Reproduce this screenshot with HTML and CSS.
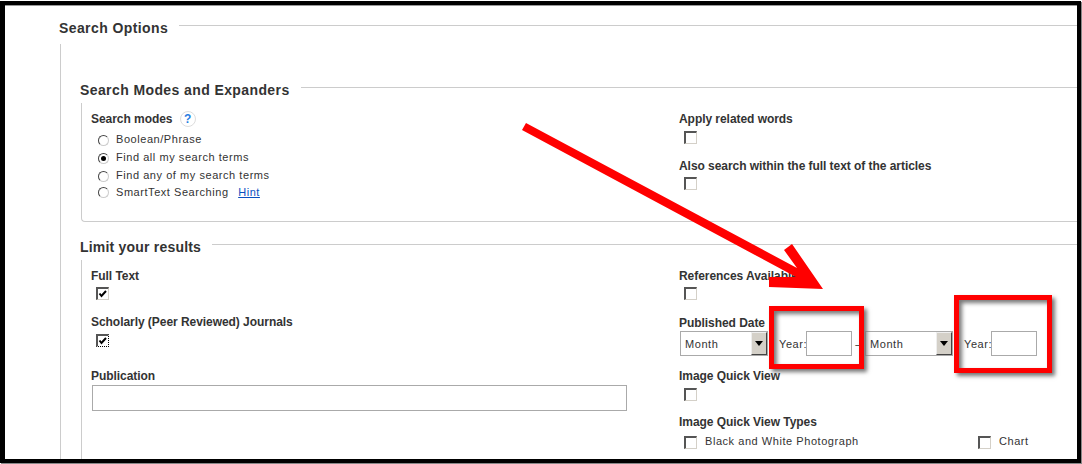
FILE: index.html
```html
<!DOCTYPE html>
<html lang="en">
<head>
  <meta charset="UTF-8">
  <title>Search Options</title>
  <link rel="stylesheet" href="styles.css">
</head>
<body>
  <div class="frame">
    <div class="legend legend-main">
      <h2>Search Options</h2>
      <span class="rule"></span>
    </div>
    <div class="options">
      <div class="legend legend-modes">
        <h3>Search Modes and Expanders</h3>
        <span class="rule"></span>
      </div>
      <div class="group group-modes">
        <div class="col">
          <div class="label">Search modes <span class="help">?</span></div>
          <div class="radios">
            <div class="radio-row"><span class="radio"></span>Boolean/Phrase</div>
            <div class="radio-row"><span class="radio on"></span>Find all my search terms</div>
            <div class="radio-row"><span class="radio"></span>Find any of my search terms</div>
            <div class="radio-row last"><span class="radio"></span>SmartText Searching <a class="hint" href="#">Hint</a></div>
          </div>
        </div>
        <div class="col expanders">
          <div class="label">Apply related words</div>
          <span class="check"></span>
          <div class="label sp-also">Also search within the full text of the articles</div>
          <span class="check"></span>
        </div>
      </div>

      <div class="legend legend-limit">
        <h3>Limit your results</h3>
        <span class="rule"></span>
      </div>
      <div class="group group-limit">
        <div class="col">
          <div class="label">Full Text</div>
          <span class="check on">
            <svg viewBox="0 0 10 10"><path d="M1.5 4.5 L3.5 7 L8 2"/></svg>
          </span>
          <div class="label sp-scholarly">Scholarly (Peer Reviewed) Journals</div>
          <span class="check on dotted sp-check-scholarly">
            <svg viewBox="0 0 10 10"><path d="M1.5 4.5 L3.5 7 L8 2"/></svg>
          </span>
          <div class="label sp-publication">Publication</div>
          <input class="text publication" type="text">
        </div>
        <div class="col">
          <div class="label">References Available</div>
          <span class="check"></span>
          <div class="label sp-published">Published Date</div>
          <div class="date-row">
            <div class="select"><span class="select-value">Month</span><span class="select-btn"></span></div>
            <span class="year">Year:</span>
            <input class="text year-input" type="text">
            <span class="dash">–</span>
            <div class="select"><span class="select-value">Month</span><span class="select-btn"></span></div>
            <span class="year">Year:</span>
            <input class="text year-input" type="text">
          </div>
          <div class="label sp-quick">Image Quick View</div>
          <span class="check sp-check-quick"></span>
          <div class="label sp-types">Image Quick View Types</div>
          <div class="types">
            <div class="type"><span class="check"></span>Black and White Photograph</div>
            <div class="type"><span class="check"></span>Chart</div>
          </div>
        </div>
      </div>
    </div>
  </div>

  <!-- red markup drawn over the screenshot -->
  <svg class="arrow" viewBox="0 0 1082 464">
    <polygon points="526,123 797,268 784,250 792,244 823,289 769,287 769,277 796,277 522,130"/>
  </svg>
  <div class="callout callout-one"></div>
  <div class="callout callout-two"></div>
</body>
</html>
```

FILE: styles.css
```css
html, body {
  margin: 0;
  height: 464px;
  overflow: hidden;
  background: #fff;
}
body {
  position: relative;
  font-family: "Liberation Sans", Arial, sans-serif;
  font-size: 11px;
  color: #333;
  letter-spacing: 0.55px;
}
.frame {
  box-sizing: border-box;
  width: 1081px;
  height: 462px;
  margin-top: 1px;
  border-style: solid;
  border-color: #000;
  border-width: 4px 4px 4px 5px;
  box-shadow: 1px 1px 0 #888, inset 0 1px 0 #999;
  overflow: hidden;
}

/* headings with a line running off to the right */
.legend {
  display: flex;
}
.legend h2, .legend h3 {
  margin: 0;
  font-size: 14px;
  font-weight: bold;
  letter-spacing: 0.4px;
  white-space: nowrap;
  line-height: 16px;
}
.rule {
  flex: 1;
  height: 1px;
  margin: 5px 0 0 11px;
  background: #ccc;
}
.legend-main {
  margin: 15px 0 0 54px;
}
.options {
  height: 400px;
  margin: 8px 0 0 55px;
  padding: 38px 0 0 19px;
  border-left: 1px solid #ccc;
}
.legend-limit {
  margin-top: 17px;
}
.legend-limit h3 {
  letter-spacing: 0.2px;
}

.group {
  display: grid;
  grid-template-columns: 588px 1fr;
  margin: 5px 0 0 1px;
  padding: 8px 0 0 9px;
  border-left: 1px solid #ccc;
}
.group-modes {
  height: 110px;
  border-bottom: 1px solid #ccc;
  border-bottom-left-radius: 4px;
}
.group-limit {
  height: 200px;
  padding-top: 9px;
}
.expanders {
  padding-top: 1px;
}

.label {
  font-size: 12px;
  font-weight: bold;
  line-height: 14px;
  letter-spacing: -0.05px;
  white-space: nowrap;
}
.help {
  display: inline-block;
  width: 14px;
  height: 14px;
  margin-left: 4px;
  border: 1px solid #ddd;
  border-radius: 50%;
  color: #2a7de1;
  text-align: center;
  line-height: 14px;
}
.radios {
  margin: 3px 0 0 7px;
}
.radio-row {
  display: flex;
  align-items: center;
  height: 18px;
  white-space: pre;
}
.radio-row.last {
  height: 17px;
  margin-top: -1px;
}
.radio {
  box-sizing: border-box;
  display: block;
  position: relative;
  width: 11px;
  height: 11px;
  margin: 2px 7px 0 0;
  border: 1px solid;
  border-color: #444 #ccc #ccc #444;
  border-radius: 50%;
}
.radio.on::after {
  content: "";
  position: absolute;
  left: 2px;
  top: 2px;
  width: 5px;
  height: 5px;
  border-radius: 50%;
  background: #000;
}
.hint {
  margin-left: 6px;
  color: #0a4fbf;
}

.check {
  box-sizing: border-box;
  display: block;
  width: 13px;
  height: 13px;
  margin: 4px 0 0 5px;
  border-style: solid;
  border-color: #555 #d4d0c8 #d4d0c8 #555;
  border-width: 2px 1px 1px 2px;
  background: #fff;
}
.expanders .check {
  margin-top: 5px;
}
.expanders .check:last-child {
  margin-top: 4px;
}
.check svg {
  display: block;
  width: 10px;
  height: 10px;
}
.check svg path {
  fill: none;
  stroke: #000;
  stroke-width: 2;
}
.check.dotted {
  border-style: solid dotted dotted solid;
  border-color: #555 #000 #000 #555;
}
.sp-also { margin-top: 15px; }
.sp-scholarly { margin-top: 15px; }
.sp-check-scholarly { margin-top: 5px; }
.sp-publication { margin-top: 22px; }
.sp-published { margin-top: 16px; }
.sp-quick { margin-top: 13px; }
.sp-check-quick { margin-top: 5px; }
.sp-types { margin-top: 14px; }

.text {
  box-sizing: border-box;
  display: block;
  margin: 0;
  border: 1px solid #aaa;
  background: #fff;
  outline: none;
}
.publication {
  width: 535px;
  height: 26px;
  margin: 2px 0 0 1px;
}

.date-row {
  display: flex;
  align-items: flex-start;
  height: 25px;
  margin: 1px 0 0 1px;
}
.select {
  box-sizing: border-box;
  display: flex;
  justify-content: space-between;
  width: 88px;
  height: 25px;
  border: 1px solid #aaa;
}
.select-value {
  padding-left: 4px;
  line-height: 25px;
}
.select-btn {
  position: relative;
  width: 16px;
  background: #d4d0c8;
  border: 1px solid;
  border-color: #eee #444 #444 #eee;
  box-sizing: border-box;
}
.select-btn::after {
  content: "";
  position: absolute;
  left: 3px;
  top: 8px;
  border: 4px solid transparent;
  border-top: 5px solid #000;
  border-bottom: 0;
}
.year {
  width: 27px;
  margin-left: 11px;
  line-height: 27px;
  white-space: nowrap;
}
.year-input {
  width: 46px;
  height: 25px;
}
.dash {
  width: 13px;
  text-align: center;
  line-height: 27px;
}

.types {
  display: grid;
  grid-template-columns: 294px 1fr;
  margin-top: 7px;
}
.type {
  display: flex;
  align-items: flex-start;
  height: 13px;
  line-height: 11px;
  white-space: nowrap;
}
.type .check {
  margin: 0 8px 0 5px;
}

/* markup */
.arrow {
  position: absolute;
  left: 0;
  top: 0;
  width: 1082px;
  height: 464px;
  pointer-events: none;
}
.arrow polygon {
  fill: #f00;
}
.callout {
  box-sizing: border-box;
  position: absolute;
  border: 5px solid #f00;
  box-shadow: 3px 3px 4px #777, inset 3px 3px 4px #777;
}
.callout-one {
  left: 769px;
  top: 306px;
  width: 95px;
  height: 63px;
}
.callout-two {
  left: 954px;
  top: 295px;
  width: 98px;
  height: 78px;
}
```
